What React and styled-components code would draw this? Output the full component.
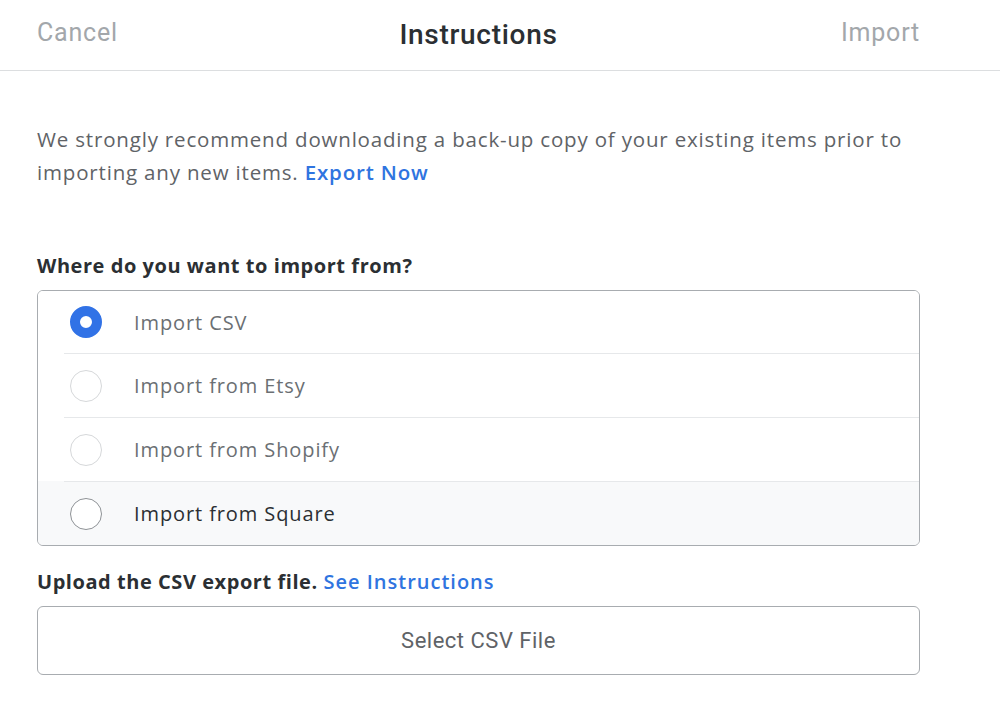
import React, { useState } from 'react';
import styled, { createGlobalStyle } from 'styled-components';

const GlobalStyle = createGlobalStyle`
  html, body {
    margin: 0;
    padding: 0;
    background: #ffffff;
    font-family: "Open Sans", "Liberation Sans", sans-serif;
  }
`;

const Page = styled.div`
  width: 1000px;
  min-height: 724px;
  background: #fff;
`;

const Header = styled.header`
  display: grid;
  grid-template-columns: 1fr auto 1fr;
  align-items: center;
  height: 70px;
  padding: 0 80px 0 37px;
  border-bottom: 1px solid #dcdee0;
`;

const HeaderAction = styled.a`
  font-family: Roboto, "Liberation Sans", sans-serif;
  font-size: 25px;
  letter-spacing: 0.8px;
  color: #a3a7ab;
  text-decoration: none;
  justify-self: ${p => (p.$right ? 'end' : 'start')};
  margin-top: -6px;
`;

const Title = styled.h1`
  margin: -2px 0 0;
  font-family: Roboto, "Liberation Sans", sans-serif;
  font-size: 28px;
  font-weight: 500;
  letter-spacing: 0.7px;
  color: #2b2f33;
`;

const Body = styled.main`
  padding: 52px 80px 0 37px;
`;

const Intro = styled.p`
  margin: 0;
  font-size: 20.5px;
  letter-spacing: 0.82px;
  line-height: 33px;
  color: #5f6367;
`;

const Link = styled.a`
  color: #2f74e0;
  font-weight: 600;
  letter-spacing: ${p => (p.$wide ? '1px' : 'inherit')};
  text-decoration: none;
`;

const Label = styled.h2`
  margin: ${p => p.$top}px 0 10px;
  font-size: 20px;
  font-weight: 700;
  letter-spacing: 0.55px;
  line-height: 28px;
  color: #2b2f33;
`;

const OptionList = styled.div`
  border: 1px solid #a8acb0;
  border-radius: 6px;
  overflow: hidden;
`;

const OptionRow = styled.div`
  background: ${p => (p.$shaded ? '#f8f9fa' : '#fff')};
`;

const OptionInner = styled.label`
  display: flex;
  align-items: center;
  height: ${p => (p.$first ? 62 : 63)}px;
  margin-left: 26px;
  padding-left: 6px;
  border-top: ${p => (p.$first ? 'none' : '1px solid #e6e8ea')};
  cursor: pointer;
`;

const Radio = styled.span`
  box-sizing: border-box;
  width: 32px;
  height: 32px;
  border-radius: 50%;
  flex: none;
  border: ${p => (p.$checked ? '10px solid #3172e6' : `1.5px solid ${p.$dark ? '#8e9296' : '#d6d8da'}`)};
  background: #fff;
`;

const OptionText = styled.span`
  margin-left: 32px;
  font-size: 20px;
  letter-spacing: 0.9px;
  color: ${p => (p.$dark ? '#2b2f33' : '#6b6f73')};
`;

const FileButton = styled.button`
  display: block;
  width: 100%;
  height: 69px;
  background: #fff;
  border: 1px solid #a8acb0;
  border-radius: 6px;
  font-family: Roboto, "Liberation Sans", sans-serif;
  font-size: 22px;
  letter-spacing: 0.5px;
  color: #5f6367;
  cursor: pointer;
`;

const options = [
  'Import CSV',
  'Import from Etsy',
  'Import from Shopify',
  'Import from Square',
];

export default function App() {
  const [selected] = useState(0);
  return (
    <Page>
      <GlobalStyle />
      <Header>
        <HeaderAction href="#">Cancel</HeaderAction>
        <Title>Instructions</Title>
        <HeaderAction href="#" $right>Import</HeaderAction>
      </Header>
      <Body>
        <Intro>
          We strongly recommend downloading a back-up copy of your existing items prior to
          importing any new items. <Link href="#">Export Now</Link>
        </Intro>
        <Label $top={63}>Where do you want to import from?</Label>
        <OptionList>
          {options.map((o, i) => {
            const last = i === options.length - 1;
            return (
              <OptionRow key={o} $shaded={last}>
                <OptionInner $first={i === 0}>
                  <Radio $checked={i === selected} $dark={last} />
                  <OptionText $dark={last}>{o}</OptionText>
                </OptionInner>
              </OptionRow>
            );
          })}
        </OptionList>
        <Label $top={22}>
          Upload the CSV export file. <Link href="#" $wide>See Instructions</Link>
        </Label>
        <FileButton>Select CSV File</FileButton>
      </Body>
    </Page>
  );
}
